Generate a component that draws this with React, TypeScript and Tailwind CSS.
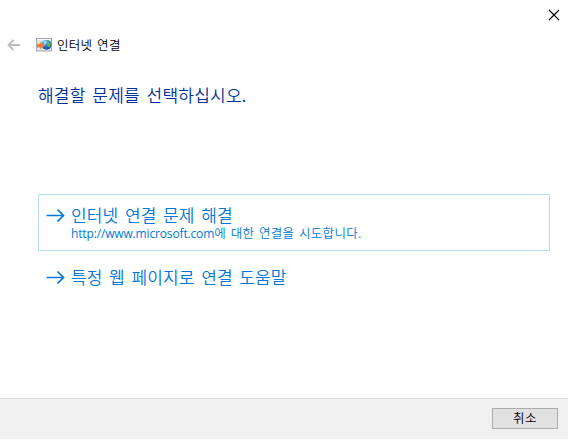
import type { ReactNode } from "react";

type CommandLinkProps = {
  title: string;
  description?: ReactNode;
  selected?: boolean;
};

function NetworkIcon() {
  return (
    <svg width="16" height="14" viewBox="0 0 16 14" aria-hidden="true">
      <defs>
        <radialGradient id="globe" cx="0.4" cy="0.25" r="0.8">
          <stop offset="0" stopColor="#7cc4f0" />
          <stop offset="0.5" stopColor="#2878c8" />
          <stop offset="1" stopColor="#123f94" />
        </radialGradient>
      </defs>
      <rect x="0.5" y="0.5" width="15" height="12.5" fill="#dde5ea" stroke="#a3abb0" />
      <path d="M1 1.5h14" stroke="#f4f7f8" />
      <circle cx="10.6" cy="6.8" r="4.9" fill="url(#globe)" />
      <path d="M7.5 3.5l2.5-1 1 1.5-1.5 2-1.5 1z" fill="#9fdcf0" />
      <path d="M12 3l2 1.5.8 2.5-1.3 2.5-1.5-1-.6-2z" fill="#5cb548" />
      <path d="M1 5.8h3.4V3.4L8.8 7.6 4.4 11.6V9.4H1z" fill="#f47b3b" />
    </svg>
  );
}

function CommandLink({ title, description, selected }: CommandLinkProps) {
  return (
    <button
      type="button"
      className={`flex w-[512px] items-start border pl-[7px] text-left text-[#0078d7] ${
        selected ? "h-[57px] border-[#b9dcf5]" : "h-[52px] border-transparent"
      }`}
    >
      <svg
        width="19"
        height="15"
        viewBox="0 0 19 15"
        fill="none"
        stroke="currentColor"
        strokeWidth="1.7"
        className="mt-[13px] shrink-0"
      >
        <path d="M0.5 7.5h17M11.5 1.5l6 6-6 6" />
      </svg>
      <span className="ml-[6px] mt-[9px] flex flex-col whitespace-nowrap">
        <span className="text-[17px] leading-[21px] tracking-[0.15px] [word-spacing:2.6px]">{title}</span>
        {description && (
          <span className="text-[12.5px] leading-[15px] tracking-[0.3px] [word-spacing:1.6px]">
            {description}
          </span>
        )}
      </span>
    </button>
  );
}

export default function App() {
  return (
    <div className="flex h-[440px] w-[568px] flex-col overflow-hidden bg-white font-['Noto_Sans_CJK_KR',sans-serif] text-black [font-weight:350]">
      <header className="flex h-[30px] justify-end">
        <button type="button" aria-label="닫기" className="mr-[8px] mt-[9px] h-[12px] w-[12px]">
          <svg width="12" height="12" viewBox="0 0 12 12" stroke="#000" strokeWidth="1.2">
            <path d="M1 1l10 10M11 1L1 11" />
          </svg>
        </button>
      </header>

      <div className="flex h-[30px] items-center pl-[7px]">
        <svg width="14" height="12" viewBox="0 0 14 12" fill="none" stroke="#bdbdbd" strokeWidth="1.8">
          <path d="M13 6H1.5M6.5 1l-5 5 5 5" />
        </svg>
        <span className="ml-[15px]">
          <NetworkIcon />
        </span>
        <span className="ml-[5px] whitespace-nowrap text-[12.5px] leading-[18px] tracking-[0.3px] [word-spacing:1.6px]">
          인터넷 연결
        </span>
      </div>

      <main className="flex-1 pl-[38px]">
        <h1 className="mt-[23px] h-[24px] whitespace-nowrap text-[17px] leading-[24px] tracking-[0.22px] text-[#003399] [font-weight:350] [word-spacing:2.7px]">
          해결할 문제를 선택하십시오.
        </h1>
        <div className="mt-[87px] flex flex-col gap-[5px]">
          <CommandLink
            selected
            title="인터넷 연결 문제 해결"
            description={
              <>
                <span className="font-['Open_Sans',sans-serif] text-[12px] font-normal tracking-[-0.15px]">
                  http://www.microsoft.com
                </span>
                에 대한 연결을 시도합니다.
              </>
            }
          />
          <CommandLink title="특정 웹 페이지로 연결 도움말" />
        </div>
      </main>

      <footer className="mb-px flex h-[41px] shrink-0 justify-end border-t border-[#dfdfdf] bg-[#f0f0f0] pr-[10px] pt-[9px]">
        <button
          type="button"
          className="flex h-[21px] w-[66px] items-center justify-center border border-[#adadad] bg-[#e1e1e1] text-[12.5px] leading-[18px] tracking-[0.4px]"
        >
          <span className="mb-px">취소</span>
        </button>
      </footer>
    </div>
  );
}
